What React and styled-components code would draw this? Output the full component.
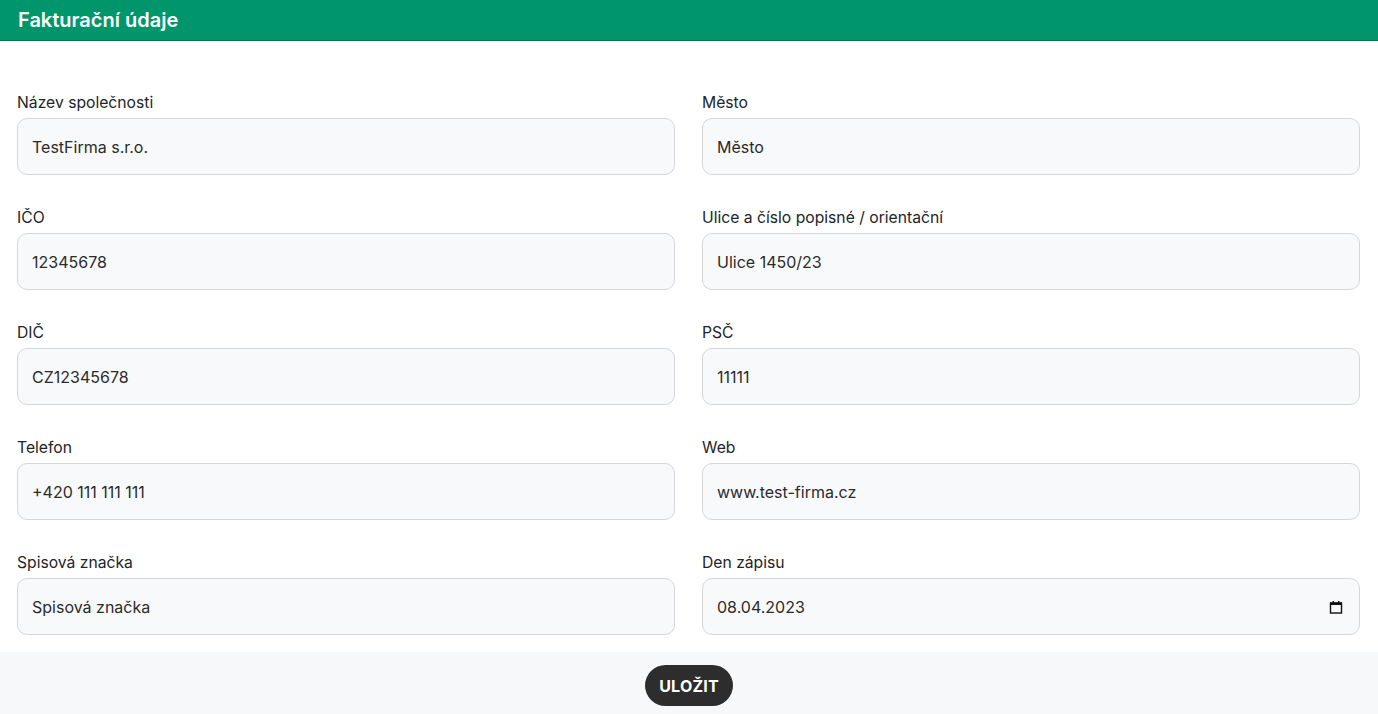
import React from 'react';
import styled, { createGlobalStyle } from 'styled-components';

const GREEN = '#00956a';
const BORDER = '#d4d6da';
const FIELD_BG = '#f8f9fb';
const TEXT = '#212529';

const Global = createGlobalStyle`
    body {
        margin: 0;
        background: white;
        font-family: Inter, "Noto Sans", sans-serif;
        color: ${TEXT};
    }
`

const Header = styled.div`
    background-color: ${GREEN};
    height: 41px;
    border-bottom: 1px solid #007a55;
    box-sizing: border-box;
    padding: 0 18px;
    display: flex;
    align-items: center;
`

const Title = styled.h2`
    margin: 0;
    color: white;
    font-size: 20px;
    font-weight: 600;
`

const Form = styled.form`
    display: grid;
    grid-template-columns: 1fr 1fr;
    column-gap: 27px;
    row-gap: 32px;
    padding: 51px 18px 17px 17px;
`

const Field = styled.div`
    display: flex;
    flex-direction: column;
`

const Label = styled.label`
    font-size: 15.7px;
    line-height: 20px;
    margin-bottom: 5px;
    padding-top: 1px;
    color: ${TEXT};
`

const Input = styled.input`
    box-sizing: border-box;
    height: 57px;
    width: 100%;
    padding: 0 14px;
    background: ${FIELD_BG};
    border: 1px solid ${BORDER};
    border-radius: 10px;
    font-family: inherit;
    font-size: 16px;
    color: #2b2b2b;
    outline: none;
`

const DateBox = styled.div`
    box-sizing: border-box;
    height: 57px;
    padding: 0 16px 0 14px;
    background: ${FIELD_BG};
    border: 1px solid ${BORDER};
    border-radius: 10px;
    display: flex;
    align-items: center;
    justify-content: space-between;
    font-size: 16px;
    color: #2b2b2b;
`

const Footer = styled.div`
    background: #f7f8fa;
    height: 62px;
    display: flex;
    justify-content: center;
    padding-top: 13px;
    box-sizing: border-box;
`

const SaveButton = styled.button`
    height: 41px;
    padding: 0 14px;
    background: #2d2d2d;
    color: white;
    border: none;
    border-radius: 21px;
    font-family: inherit;
    font-size: 16px;
    font-weight: 700;
    letter-spacing: 0.2px;
    cursor: pointer;
`

const CalendarIcon = () => (
    <svg width="14" height="14" viewBox="0 0 14 14">
        <rect x="1.5" y="3" width="11" height="10" fill="none" stroke="#111" strokeWidth="1.4" />
        <rect x="1" y="2.5" width="12" height="2.5" fill="#111" />
        <rect x="3.5" y="1" width="1.4" height="2" fill="#111" />
        <rect x="9.1" y="1" width="1.4" height="2" fill="#111" />
    </svg>
)

const fields = [
    ['Název společnosti', 'TestFirma s.r.o.'],
    ['Město', 'Město'],
    ['IČO', '12345678'],
    ['Ulice a číslo popisné / orientační', 'Ulice 1450/23'],
    ['DIČ', 'CZ12345678'],
    ['PSČ', '11111'],
    ['Telefon', '+420 111 111 111'],
    ['Web', 'www.test-firma.cz'],
    ['Spisová značka', 'Spisová značka'],
]

function App() {
    return (
        <>
            <Global />
            <Header>
                <Title>Fakturační údaje</Title>
            </Header>
            <Form onSubmit={e => e.preventDefault()}>
                {fields.map(([label, value]) => (
                    <Field key={label}>
                        <Label>{label}</Label>
                        <Input defaultValue={value} />
                    </Field>
                ))}
                <Field>
                    <Label>Den zápisu</Label>
                    <DateBox>
                        <span>08.04.2023</span>
                        <CalendarIcon />
                    </DateBox>
                </Field>
            </Form>
            <Footer>
                <SaveButton>ULOŽIT</SaveButton>
            </Footer>
        </>
    )
}

export default App;
